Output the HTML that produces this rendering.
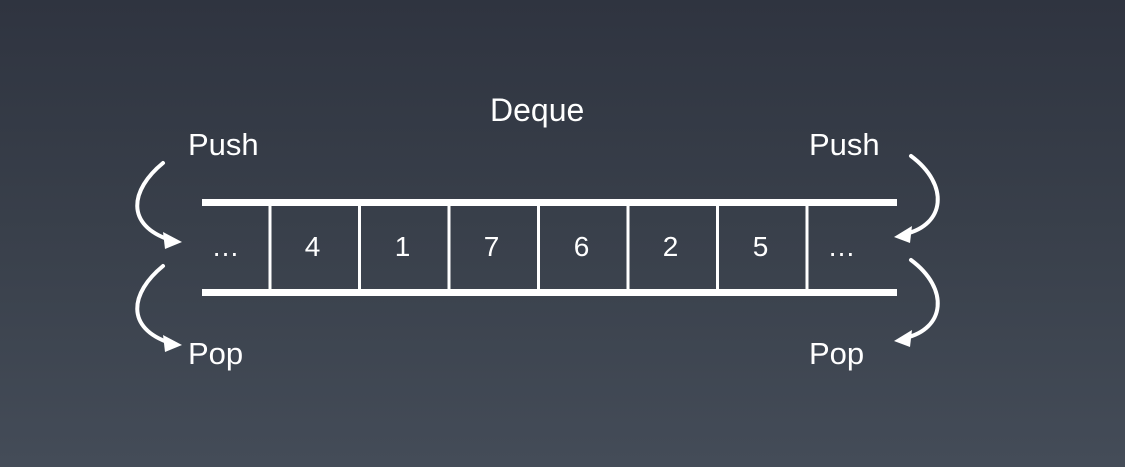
<!DOCTYPE html>
<html><head><meta charset="utf-8"><style>
html,body{margin:0;padding:0}
body{width:1125px;height:467px;overflow:hidden;background:linear-gradient(180deg,#2f3440 0%,#3a414c 55%,#444c58 100%);font-family:"Liberation Sans",sans-serif;color:#fff;position:relative}
.t{position:absolute;font-size:31px;line-height:1;white-space:nowrap}
.d{position:absolute;font-size:28px;line-height:1;width:89px;text-align:center;top:233px}
</style></head><body>
<svg width="1125" height="467" style="position:absolute;left:0;top:0">
<g fill="#fff">
<rect x="202" y="199" width="695" height="7"/>
<rect x="202" y="289" width="695" height="7"/>
<rect x="268.5" y="206" width="3" height="83"/>
<rect x="358" y="206" width="3" height="83"/>
<rect x="447.5" y="206" width="3" height="83"/>
<rect x="537" y="206" width="3" height="83"/>
<rect x="626.5" y="206" width="3" height="83"/>
<rect x="716" y="206" width="3" height="83"/>
<rect x="805.5" y="206" width="3" height="83"/>
</g>
<g fill="none" stroke="#fff" stroke-width="4" stroke-linecap="round">
<path d="M163 163 C130 190 125 225 170 240"/>
<path d="M163 266 C130 293 125 328 170 343"/>
<path d="M911 156 C950 185 945 225 905 234"/>
<path d="M911 260 C950 289 945 329 905 338"/>
</g>
<g fill="#fff">
<path d="M182 242 L163 232 L165 249 Z"/>
<path d="M182 345 L163 335 L165 352 Z"/>
<path d="M894 237 L912 226 L910 243 Z"/>
<path d="M894 341 L912 330 L910 347 Z"/>
</g>
</svg>
<div class="t" style="left:490px;top:94px;font-size:32px">Deque</div>
<div class="t" style="left:188px;top:129px">Push</div>
<div class="t" style="left:809px;top:129px">Push</div>
<div class="t" style="left:188px;top:338px">Pop</div>
<div class="t" style="left:809px;top:338px">Pop</div>
<div class="d" style="left:181px">…</div>
<div class="d" style="left:268px">4</div>
<div class="d" style="left:358px">1</div>
<div class="d" style="left:447px">7</div>
<div class="d" style="left:537px">6</div>
<div class="d" style="left:626px">2</div>
<div class="d" style="left:716px">5</div>
<div class="d" style="left:797px">…</div>
</body></html>
